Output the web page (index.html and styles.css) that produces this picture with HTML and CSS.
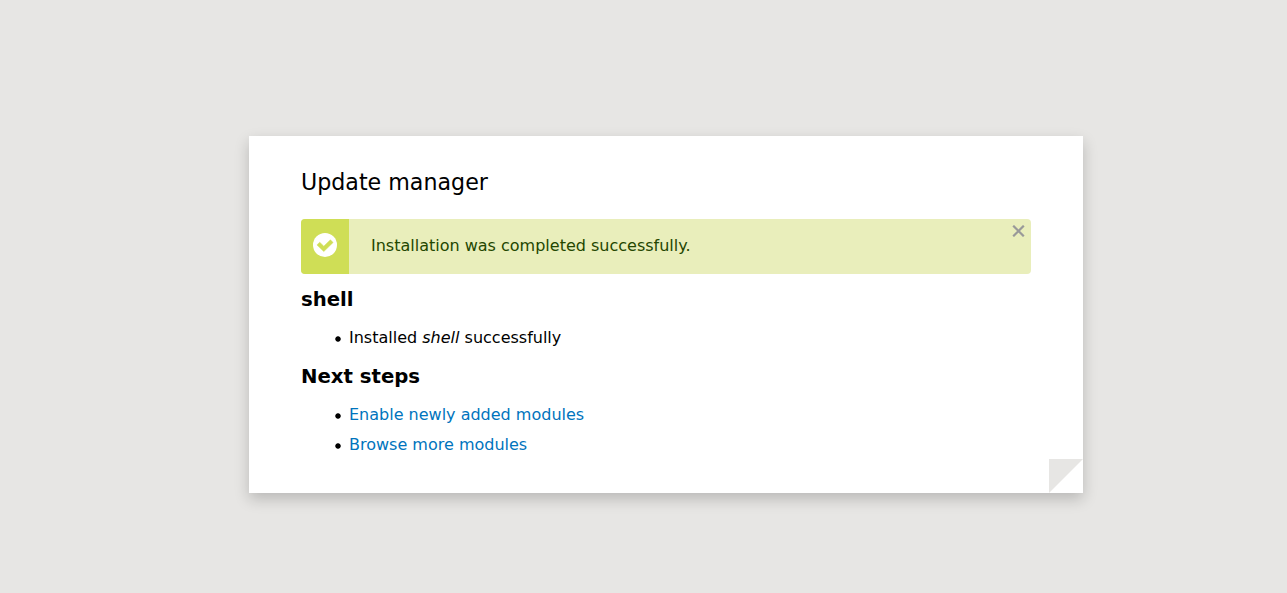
FILE: index.html
```html
<!DOCTYPE html>
<html lang="en">
<head>
<meta charset="utf-8">
<title>Update manager</title>
<link rel="stylesheet" href="styles.css">
</head>
<body>
<main class="card">
  <h1 class="title">Update manager</h1>
  <div class="alert">
    <div class="alert-icon">
      <svg width="24" height="24" viewBox="0 0 24 24"><circle cx="12" cy="12" r="12" fill="#fff"/><path d="M4 11.9L6.7 9.2L10.8 13.2L17.4 6.8L20.1 9.5L10.8 18.6Z" fill="#cfde56" stroke="#cfde56" stroke-width=".5" stroke-linejoin="round"/></svg>
    </div>
    <p class="alert-text">Installation was completed successfully.</p>
    <svg class="close" width="13" height="12" viewBox="0 0 13 12"><path d="M1.2.7l10.6 10.6M11.8.7L1.2 11.3" stroke="#999" stroke-width="2.2"/></svg>
  </div>
  <h2 class="heading">shell</h2>
  <ul class="list"><li class="item"><span>Installed <em>shell</em> successfully</span></li></ul>
  <h2 class="heading">Next steps</h2>
  <ul class="list">
    <li class="item"><a class="link" href="#">Enable newly added modules</a></li>
    <li class="item"><a class="link" href="#">Browse more modules</a></li>
  </ul>
  <svg class="fold" width="34" height="34" viewBox="0 0 34 34"><path d="M0 0H34L0 34Z" fill="#e7e6e4"/></svg>
</main>
</body>
</html>
```
FILE: styles.css
```css
body {
  box-sizing: border-box;
  min-height: 593px;
  margin: 0;
  padding-top: 136px;
  background: #e7e6e4;
  color: #000;
  font: 16px/30px "DejaVu Sans", sans-serif;
}
.card {
  position: relative;
  box-sizing: border-box;
  width: 834px;
  height: 357px;
  margin-left: 249px;
  padding: 30px 52px 0;
  background: #fff;
  box-shadow: 0 6px 14px rgba(0, 0, 0, .2);
}
.title {
  margin: 0 0 21px;
  font-size: 22.16px;
  line-height: 32px;
  font-weight: 400;
}
.alert {
  display: flex;
  height: 55px;
  margin-bottom: 10px;
  border-radius: 4px;
  overflow: hidden;
  background: #e9eebb;
  color: #234600;
}
.alert-icon {
  display: flex;
  justify-content: center;
  width: 48px;
  padding-top: 14px;
  box-sizing: border-box;
  background: #cfde56;
}
.alert-text {
  flex: 1;
  margin: 0;
  padding: 12px 0 0 22px;
}
.close { margin: 6px 6px 0 0; }
.heading {
  margin: 0;
  font-size: 19.7px;
  line-height: 32px;
}
.list {
  margin: 7px 0 8px;
  padding-left: 34px;
  list-style: none;
}
.item {
  display: flex;
  align-items: center;
}
/* The disc is a gradient inside a 6px box, which keeps its edge soft. */
.item::before {
  content: "";
  width: 6px;
  height: 6px;
  margin: 1px 8px 0 0;
  background: radial-gradient(circle, #000 2.3px, transparent 3.1px);
}
.link {
  color: #0074bd;
  text-decoration: none;
}
.fold {
  position: absolute;
  right: 0;
  bottom: 0;
}
```
